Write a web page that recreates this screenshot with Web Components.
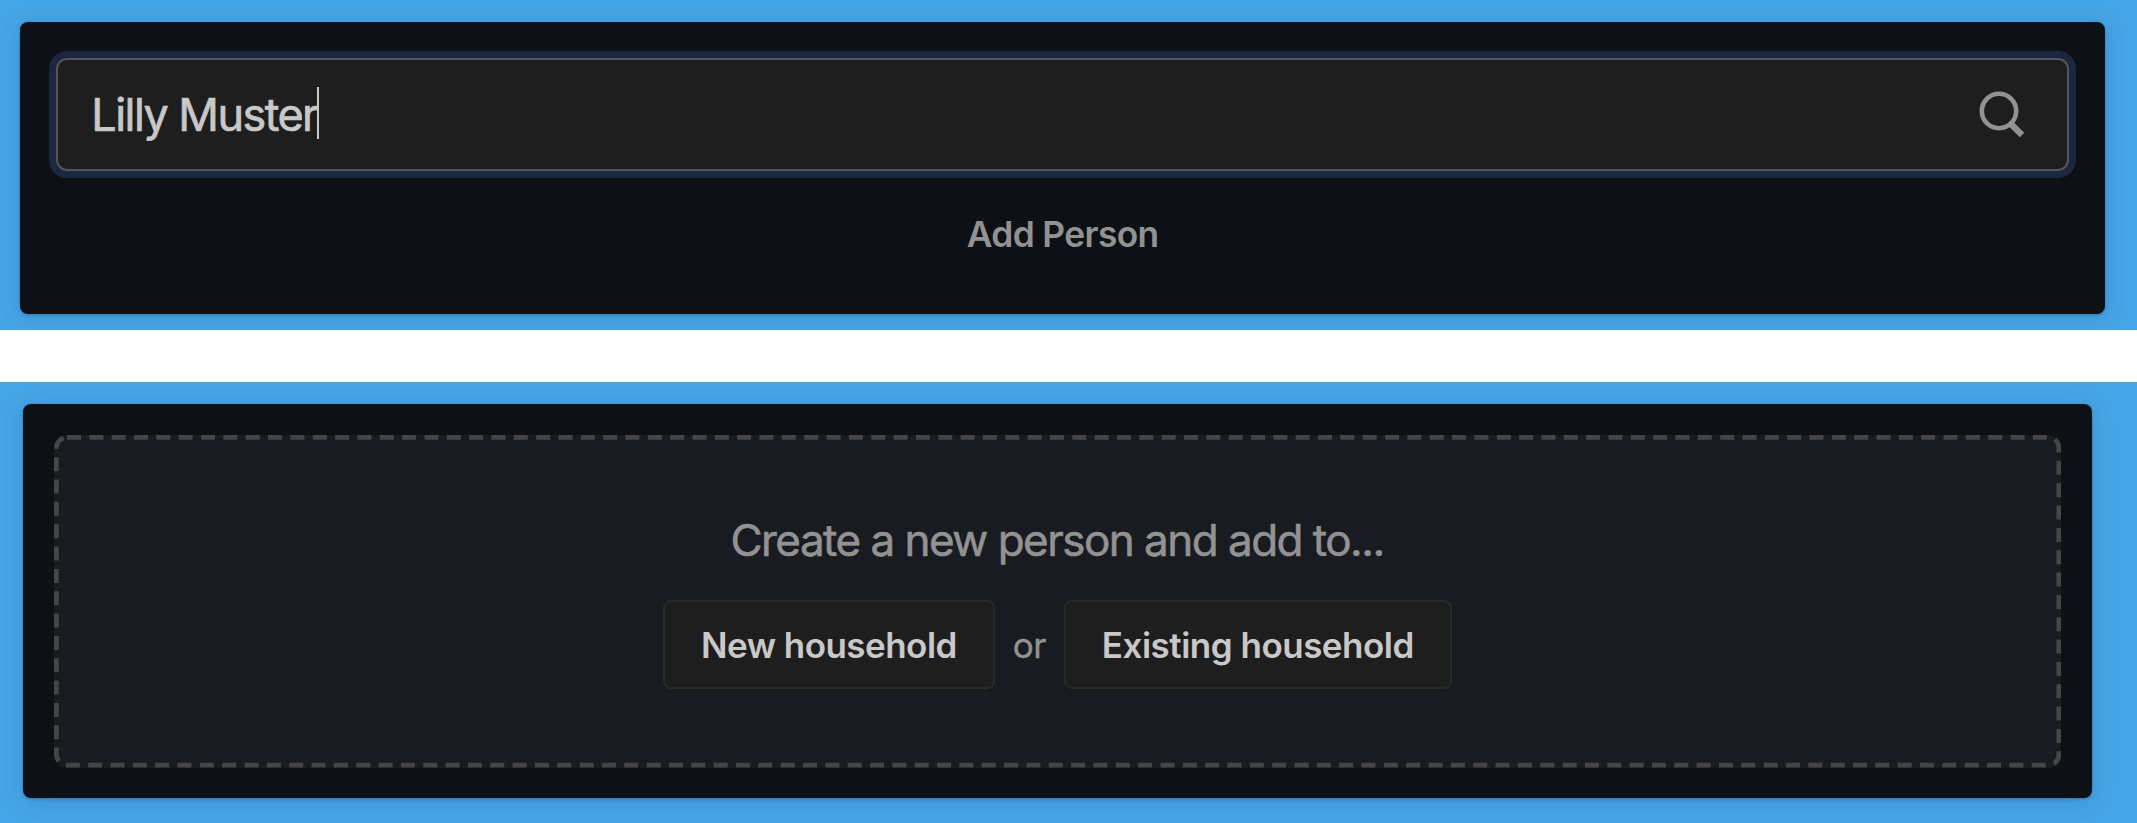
<!DOCTYPE html>
<html lang="en"><head><meta charset="utf-8"><title>People</title>
<style>
html,body{margin:0;width:2137px;height:823px;overflow:hidden;background:#fff}
body{font-family:Inter,"Liberation Sans",sans-serif;display:flex;flex-direction:column;justify-content:space-between}
</style></head><body>
<blue-stage style="--h:330px;--pad:22.4px 32px 16px 20px">
 <dark-panel style="--pad:35.6px 36px 0 36.3px">
  <search-field>Lilly Muster</search-field>
  <section-label>Add Person</section-label>
 </dark-panel>
</blue-stage>
<blue-stage style="--h:441px;--pad:22px 45.5px 25px 23px">
 <dark-panel style="--pad:31px 30.5px 30.5px 31px">
  <drop-zone>
   <span slot="title">Create a new person and add to...</span>
   <action-button style="--w:331.5px;--ls:-.53px">New household</action-button>
   <span slot="or">or</span>
   <action-button slot="second" style="--w:388px;--ls:-.5px">Existing household</action-button>
  </drop-zone>
 </dark-panel>
</blue-stage>
<script>
const define=(name,html)=>customElements.define(name,class extends HTMLElement{
  constructor(){super();this.attachShadow({mode:'open'}).innerHTML=html;}
});
define('blue-stage',`<style>
:host{display:flex;box-sizing:border-box;height:var(--h);padding:var(--pad);background:#46a5e6;overflow:hidden}
::slotted(*){flex:1}
</style><slot></slot>`);
define('dark-panel',`<style>
:host{display:flex;flex-direction:column;box-sizing:border-box;padding:var(--pad);border-radius:8px;background:#0d1014;box-shadow:0 4px 22px rgba(20,60,100,.16),0 1px 3px rgba(20,60,100,.35)}
</style><slot></slot>`);
define('search-field',`<style>
:host{display:flex;align-items:center;justify-content:space-between;box-sizing:border-box;height:113px;padding:0 42px 0 33px;border:2px solid #555;border-radius:11px;background:#1e1e1e;box-shadow:0 0 0 7px #1b2740;color:#c8c8c8}
.value{display:flex;align-items:center;height:54px}
.text{font-size:45px;line-height:54px;letter-spacing:-1.55px;-webkit-text-stroke:.7px;padding-top:2px}
.caret{width:2px;height:52px;background:#c8c8c8;margin:0 0 3px -.5px}
svg{display:block;margin-bottom:.6px}
</style><div class="value"><span class="text"><slot></slot></span><span class="caret"></span></div>
<svg width="46" height="46" viewBox="0 0 46 46" fill="none" stroke="#929292"><circle cx="20" cy="20" r="17.2" stroke-width="4.6"/><path d="M31 32L43 44" stroke-width="6.4"/></svg>`);
define('section-label',`<style>
:host{display:block;margin-top:42px;text-align:center;font-size:35.3px;line-height:44px;font-weight:600;letter-spacing:-.6px;color:#929292}
</style><slot></slot>`);
define('action-button',`<style>
:host{display:block}
button{display:block;box-sizing:border-box;width:var(--w);height:89px;margin:0;padding:0;border:2px solid #292929;border-radius:8px;background:#1e1e1e;color:#c8c8c8;font:600 35px/44px Inter,"Liberation Sans",sans-serif;letter-spacing:var(--ls)}
</style><button><slot></slot></button>`);
define('drop-zone',`<style>
:host{display:flex;flex:1;flex-direction:column;align-items:center;position:relative;border-radius:13px;background:#181b20;color:#929292}
svg{position:absolute;left:0;top:0}
.title{margin-top:78px;font-size:44px;line-height:54px;letter-spacing:-1.53px;padding-right:1px;white-space:nowrap;-webkit-text-stroke:.6px}
.row{display:flex;align-items:center;margin-top:33px;gap:18px}
.or{font-size:35px;line-height:44px;letter-spacing:-.5px;-webkit-text-stroke:.4px}
</style><svg width="2007" height="333" fill="none"><rect x="2.4" y="2.4" width="2002.4" height="327.8" rx="10.6" stroke="#454545" stroke-width="4.8" stroke-dasharray="14 8.34"/></svg>
<div class="title"><slot name="title"></slot></div>
<div class="row"><slot></slot><span class="or"><slot name="or"></slot></span><slot name="second"></slot></div>`);
</script>
</body></html>
